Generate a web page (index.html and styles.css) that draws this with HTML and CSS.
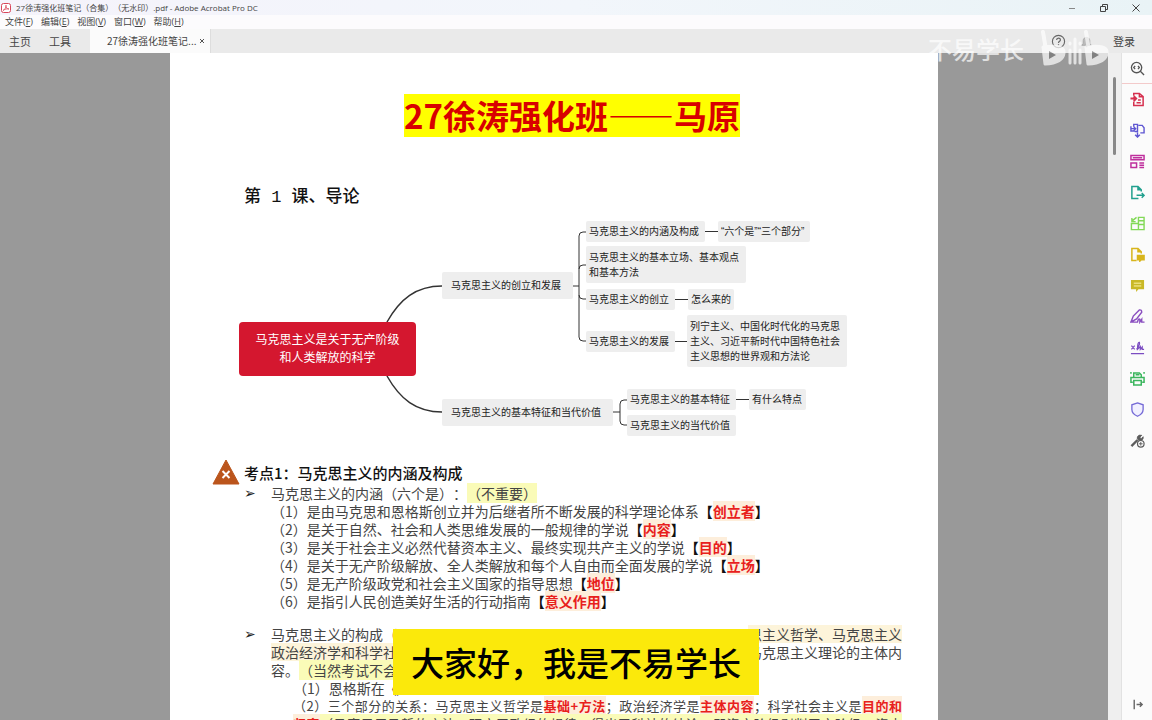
FILE: index.html
```html
<!DOCTYPE html>
<html lang="zh-CN">
<head>
    <meta charset="UTF-8">
    <meta name="viewport" content="width=device-width, initial-scale=1.0">
    <title>27徐涛强化班笔记（合集）（无水印）.pdf - Adobe Acrobat Pro DC</title>
    <link rel="stylesheet" href="styles.css">
</head>
<body>
    <header class="title-bar">
        <svg class="app-icon" viewBox="0 0 10 10"><rect x="0.5" y="0.5" width="9" height="9" rx="2" fill="#fff" stroke="#d8465a"/><path d="M2 7.500C4 6.500 5.300 4 5 2.200C4.500 4.500 6 6 8 6C6 5.500 4 6 2 7.500Z" fill="none" stroke="#d8465a" stroke-width="0.800"/></svg>
        <span class="window-title">27徐涛强化班笔记（合集）（无水印）.pdf - Adobe Acrobat Pro DC</span>
        <div class="window-buttons">
            <button aria-label="最小化"><svg viewBox="0 0 10 10"><path d="M2 5.500H8" stroke="#888"/></svg></button>
            <button aria-label="还原"><svg viewBox="0 0 10 10"><path d="M1.500 3.500H6.500V8.500H1.500ZM3.500 3V1.500H8.500V6.500H7" fill="none" stroke="#444"/></svg></button>
            <button aria-label="关闭"><svg viewBox="0 0 10 10"><path d="M1.500 1.500L8.500 8.500M8.500 1.500L1.500 8.500" stroke="#444"/></svg></button>
        </div>
    </header>

    <nav class="menu-bar">
        <button>文件(<u>F</u>)</button>
        <button>编辑(<u>E</u>)</button>
        <button>视图(<u>V</u>)</button>
        <button>窗口(<u>W</u>)</button>
        <button>帮助(<u>H</u>)</button>
    </nav>

    <div class="tab-bar">
        <button class="tab-home">主页</button>
        <button class="tab-home">工具</button>
        <div class="tab-active">
            <span>27徐涛强化班笔记...</span>
            <button class="tab-close" aria-label="关闭标签"><svg viewBox="0 0 6 6" width="6" height="6"><path d="M1 1L5 5M5 1L1 5" stroke="#555"/></svg></button>
        </div>
        <div class="account">
            <button aria-label="帮助"><svg class="icon" viewBox="0 0 16 16"><circle cx="8" cy="8" r="6.500" fill="none" stroke="#666" stroke-width="1.200"/><path d="M6 6.500C6 3.800 10 3.800 10 6.300C10 7.800 8 7.700 8 9.500M8 10.800V12" fill="none" stroke="#666" stroke-width="1.300"/></svg></button>
            <button aria-label="通知"><svg class="icon" viewBox="0 0 16 16"><path d="M3 12H13L11.500 10V7C11.500 2.500 4.500 2.500 4.500 7V10ZM7 13.500H9" fill="#bbb" stroke="#aaa"/></svg></button>
            <button class="login">登录</button>
        </div>
    </div>

    <main class="workspace">
        <div class="viewer">
            <article class="page">
                <h1 class="doc-title"><span>27徐涛强化班——马原</span></h1>
                <h2 class="lesson">第 1 课、导论</h2>

                <div class="mindmap">
                    <svg class="links" viewBox="0 0 680 225" width="680" height="225" fill="none" stroke="#333">
                        <path d="M217 107C230 84 246 71 272 71M217 161C230 184 246 197 272 197" stroke-width="1.500"/>
                        <path d="M403 71H409M416 17H413Q409 17 409 21V122Q409 126 413 126H416M416 50H413Q409 50 409 54M416 84H413Q409 84 409 80"/>
                        <path d="M535 16.500H548M505 84.500H518M505 126.500H517M566 184.500H579"/>
                        <path d="M443 197H450M457 185H454Q450 185 450 189V206Q450 210 454 210H457"/>
                    </svg>
                    <div class="node root">马克思主义是关于无产阶级<br>和人类解放的科学</div>
                    <div class="node branch-origin">马克思主义的创立和发展</div>
                    <div class="node branch-value">马克思主义的基本特征和当代价值</div>
                    <div class="node leaf-meaning">马克思主义的内涵及构成</div>
                    <div class="node leaf-parts">“六个是”“三个部分”</div>
                    <div class="node leaf-stance">马克思主义的基本立场、基本观点<br>和基本方法</div>
                    <div class="node leaf-founding">马克思主义的创立</div>
                    <div class="node leaf-how">怎么来的</div>
                    <div class="node leaf-growth">马克思主义的发展</div>
                    <div class="node leaf-theories">列宁主义、中国化时代化的马克思<br>主义、习近平新时代中国特色社会<br>主义思想的世界观和方法论</div>
                    <div class="node leaf-feature">马克思主义的基本特征</div>
                    <div class="node leaf-what">有什么特点</div>
                    <div class="node leaf-today">马克思主义的当代价值</div>
                </div>

                <h3 class="point">
                    <svg viewBox="0 0 28 26" width="28" height="26"><path d="M14 1L27 25H1Z" fill="#bb551c" stroke="#bb551c" stroke-linejoin="round"/><path d="M10.500 12L17.500 19M17.500 12L10.500 19" stroke="#fff" stroke-width="2"/></svg>
                    <span>考点1：马克思主义的内涵及构成</span>
                </h3>

                <section class="notes">
                    <span class="bullet">➢</span>
                    <div class="lines">
                        <p>马克思主义的内涵（六个是）：<mark class="hl-yellow">（不重要）</mark></p>
                        <p>（1）是由马克思和恩格斯创立并为后继者所不断发展的科学理论体系<b>【<mark>创立者</mark>】</b></p>
                        <p>（2）是关于自然、社会和人类思维发展的一般规律的学说<b>【<mark>内容</mark>】</b></p>
                        <p>（3）是关于社会主义必然代替资本主义、最终实现共产主义的学说<b>【<mark>目的</mark>】</b></p>
                        <p>（4）是关于无产阶级解放、全人类解放和每个人自由而全面发展的学说<b>【<mark>立场</mark>】</b></p>
                        <p>（5）是无产阶级政党和社会主义国家的指导思想<b>【<mark>地位</mark>】</b></p>
                        <p>（6）是指引人民创造美好生活的行动指南<b>【<mark>意义作用</mark>】</b></p>
                    </div>
                </section>

                <section class="notes">
                    <span class="bullet">➢</span>
                    <div class="lines">
                        <p class="split"><span>马克思主义的构成（</span><span class="hl-peach">思主义哲学、马克思主义</span></p>
                        <p class="split"><span class="hl-peach">政治经济学和科学社</span><span>马克思主义理论的主体内</span></p>
                        <p>容。<span class="hl-yellow">（当然考试不会</span></p>
                        <p class="indent">（1）恩格斯在《</p>
                        <p class="indent full">（2）三个部分的关系：马克思主义哲学是<mark>基础+方法</mark>；政治经济学是<mark>主体内容</mark>；科学社会主义是<mark>目的和</mark></p>
                        <p class="indent full"><mark>归宿</mark><span class="hl-yellow">（马克思用马哲的方法，研究了政经的规律，得出了科社的结论，即资产阶级剥削无产阶级，资本</span></p>
                    </div>
                </section>
            </article>
        </div>

        <div class="scrollbar"><div class="thumb"></div></div>

        <aside class="tools">
            <button class="search" aria-label="搜索工具"><svg class="icon" viewBox="0 0 16 16" fill="none" stroke="#555" stroke-width="1.400"><circle cx="7" cy="7" r="5.500"/><path d="M11 11L15 15M5.500 5.300L4 7L5.500 8.700M8.500 5.300L10 7L8.500 8.700"/></svg></button>
            <button aria-label="创建 PDF"><svg class="icon" viewBox="0 0 16 16" fill="none" stroke="#d6304f" stroke-width="1.600"><path d="M4 4V1.500H10L14 5V14.500H4V10M10 1.500V5H14"/><path d="M0.500 7H6M4 4.500L6.500 7L4 9.500" stroke-width="2.200"/><path d="M7 11.500H11.500M8.500 8.500H11.500"/></svg></button>
            <button aria-label="合并文件"><svg class="icon" viewBox="0 0 16 16" fill="none" stroke="#5f57d2" stroke-width="1.500"><path d="M4 4V1.500H8V9H5M9 2.500H13L15 5V10.500H11M1 3.500V8.500H5M8 10V15M5.500 12.500L8 15L10.500 12.500M1 6H6M4 4L6 6L4 8"/></svg></button>
            <button aria-label="组织页面"><svg class="icon" viewBox="0 0 16 16" fill="none" stroke="#bf2f9d" stroke-width="1.600"><path d="M1 1.500H15V6H1ZM1 9.500H7V14.500H1ZM10 9.500H15M10 12H15M10 14.500H15M3 4H13"/></svg></button>
            <button aria-label="导出 PDF"><svg class="icon" viewBox="0 0 16 16" fill="none" stroke="#21a08e" stroke-width="1.600"><path d="M12 7V5L8.500 1.500H2V14.500H9M8.500 1.500V5H12M7 11H15M12.500 8.500L15 11L12.500 13.500"/></svg></button>
            <button aria-label="编辑 PDF"><svg class="icon" viewBox="0 0 16 16" fill="none" stroke="#82d957" stroke-width="1.500"><path d="M9 1.500H15V14.500H9ZM1.500 8V14.500H9V8ZM7 1.500L2 5.500M2 2V6H6M9 5H15M9 9H15"/></svg></button>
            <button aria-label="发送以供审阅"><svg class="icon" viewBox="0 0 16 16" fill="none" stroke="#d8b51c" stroke-width="1.600"><path d="M12 7V5L8.500 1.500H2V14.500H7M8.500 1.500V5H12"/><path d="M8 9H15V13.500H12L10.500 15V13.500H8Z" fill="#d8b51c"/></svg></button>
            <button aria-label="注释"><svg class="icon" viewBox="0 0 16 16"><path d="M1 2H15V12H9L6.500 15V12H1Z" fill="#c9b826"/><path d="M4 5.500H12M4 8.500H12" stroke="#fff6b0"/></svg></button>
            <button aria-label="填写和签名"><svg class="icon" viewBox="0 0 16 16" fill="none" stroke="#8a4fc0" stroke-width="1.500"><path d="M1 14L3.500 7.500L10 1Q12.500 0.500 12.500 3.500L7 10.500L1 14H8Q9 9.500 10.500 11V14L12.500 11V14H15.500"/></svg></button>
            <button aria-label="请求签名"><svg class="icon" viewBox="0 0 16 16" fill="none" stroke="#7b4cc2" stroke-width="1.300"><path d="M1 14.500H15M1.500 6L5 10M5 6L1.500 10M7 10Q11 5 10 2.500Q8 2 8 10L11 7V10L13 7.500V10H15"/></svg></button>
            <button aria-label="扫描和 OCR"><svg class="icon" viewBox="0 0 16 16" fill="none" stroke="#3bb65e" stroke-width="1.600"><path d="M4 6V2H10L12 4V6M3 12H1V7H15V12H13M4 10H12V15H4ZM1 3V1M15 3V1M6 4H10"/></svg></button>
            <button aria-label="保护"><svg class="icon" viewBox="0 0 16 16"><path d="M8 1L14 3V8Q14 12.500 8 15.200Q2 12.500 2 8V3Z" fill="#f1f0ff" stroke="#7469d6" stroke-width="1.400"/></svg></button>
            <button aria-label="更多工具"><svg class="icon" viewBox="0 0 16 16" fill="none" stroke="#5c5c5c"><path d="M1.500 14L8 7.500" stroke-width="2.500"/><path d="M12.500 2.500L10.500 4.500L12 6L14 4Q14.500 8 10.500 8Q7 7.500 8 4Q9 1.500 12.500 2.500Z" fill="#5c5c5c"/><circle cx="11.500" cy="11.500" r="3.500" fill="#fff" stroke-width="1.300"/><path d="M11.500 9.500V13.500M9.500 11.500H13.500"/></svg></button>
            <button class="collapse" aria-label="折叠"><svg class="icon" viewBox="0 0 16 16" fill="none" stroke="#666" stroke-width="1.500"><path d="M4.500 3V13M7 8H13M10.500 5.500L13 8L10.500 10.500"/></svg></button>
        </aside>
    </main>

    <div class="watermark">
        <span>不易学长</span>
        <svg viewBox="0 0 74 40" width="74" height="40" fill="none" stroke="#fff" stroke-linejoin="round" stroke-linecap="round">
            <path d="M5 3L8 21M48 3L51 21" stroke-width="4"/>
            <path d="M5 18Q27 15 26 24Q25 34 7 35ZM48 18Q70 15 69 24Q68 34 50 35Z" fill="#fff" stroke-width="3"/>
            <path d="M32 21V34M37 10V34M42 21V34M32 14V15M42 14V15" stroke-width="3"/>
            <path d="M11 22L18 26L11 30ZM54 22L61 26L54 30Z" fill="#777" stroke="none"/>
        </svg>
    </div>

    <div class="caption">大家好，我是不易学长</div>
</body>
</html>
```

FILE: styles.css
```css
* {
    margin: 0;
    padding: 0;
    box-sizing: border-box;
}

body {
    position: relative;
    display: flex;
    flex-direction: column;
    height: 100vh;
    overflow: hidden;
    font-family: "Noto Sans CJK SC", sans-serif;
    text-spacing-trim: space-all;
    color: #444;
    background-color: #999;
}

button {
    border: none;
    background: none;
    font: inherit;
    color: inherit;
    cursor: pointer;
}

.icon {
    display: block;
    width: 15px;
    height: 15px;
}

/* window frame */
.title-bar {
    display: flex;
    align-items: center;
    height: 15px;
    padding-left: 1px;
    gap: 5px;
    font-family: "Open Sans", "Noto Sans CJK SC", sans-serif;
    font-size: 8px;
    line-height: 15px;
    background: linear-gradient(to right, #f5f3fb, #f2f6fb 50%, #e9f3f6);
}

.app-icon {
    width: 10px;
    height: 10px;
}

.window-title {
    flex: 1;
    white-space: nowrap;
}

.window-buttons {
    display: flex;
}

.window-buttons button {
    display: grid;
    place-items: center;
    width: 32px;
    height: 15px;
}

.window-buttons svg {
    width: 10px;
    height: 10px;
}

.menu-bar {
    display: flex;
    gap: 8px;
    height: 14px;
    padding-left: 5px;
    font-family: "Open Sans", "Noto Sans CJK SC", sans-serif;
    font-size: 9px;
    line-height: 14px;
    background-color: #fcfbfd;
}

.tab-bar {
    display: flex;
    height: 24px;
    font-size: 11px;
    line-height: 24px;
    background-color: #eaeaea;
}

.tab-home {
    width: 40px;
}

.tab-active {
    display: flex;
    justify-content: space-between;
    width: 121px;
    margin-left: 10px;
    padding: 0 5px 0 17px;
    font-size: 10px;
    white-space: nowrap;
    background-color: #fbfbfb;
    border-right: 1px solid #ddd;
}

.tab-close {
    display: grid;
    place-items: center;
}

.account {
    display: flex;
    align-items: center;
    gap: 13px;
    margin-left: auto;
    padding-right: 17px;
}

.login {
    margin-left: 6px;
}

/* document */
.workspace {
    display: flex;
    flex: 1;
    min-height: 0;
}

.viewer {
    flex: 1;
    overflow: hidden;
    background-color: #999;
}

.page {
    max-width: 768px;
    min-height: 100%;
    margin: 0 auto;
    padding-top: 41px;
    background-color: #fff;
}

.doc-title {
    padding-left: 36px;
    color: #d80000;
    font-size: 33px;
    font-weight: 700;
    line-height: 43px;
    text-align: center;
}

.doc-title span {
    display: inline-block;
    background-color: #ff0;
}

.lesson {
    margin-top: 49px;
    padding-left: 74px;
    color: #111;
    font-family: "Liberation Mono", "Noto Sans CJK SC", monospace;
    font-size: 17px;
    font-weight: 500;
    line-height: 24px;
}

.mindmap {
    position: relative;
    height: 245px;
    margin-top: 5px;
    color: #222;
    font-family: "Liberation Sans", "Noto Sans CJK SC", sans-serif;
    font-size: 10px;
    line-height: 15px;
}

.links {
    position: absolute;
    left: 0;
    top: 0;
}

/* nodes are placed freely on the map */
.node {
    position: absolute;
    display: flex;
    align-items: center;
    height: 21px;
    padding-left: 3px;
    white-space: nowrap;
    background-color: #eee;
    border-radius: 2px;
}

.root {
    left: 69px;
    top: 107px;
    width: 177px;
    height: 54px;
    justify-content: center;
    padding: 0;
    color: #fff;
    font-size: 12px;
    line-height: 18px;
    text-align: center;
    background-color: #d4172f;
    border-radius: 4px;
}

.branch-origin,
.branch-value {
    left: 272px;
    height: 27px;
    padding-left: 9px;
}

.branch-origin { top: 57px; width: 131px; }
.branch-value { top: 184px; width: 171px; }

.leaf-meaning { left: 416px; top: 6px; width: 119px; }
.leaf-parts { left: 548px; top: 6px; width: 92px; }
.leaf-stance { left: 416px; top: 31px; width: 160px; height: 37px; }
.leaf-founding { left: 416px; top: 74px; width: 89px; }
.leaf-how { left: 518px; top: 74px; width: 46px; }
.leaf-growth { left: 416px; top: 116px; width: 89px; }
.leaf-theories { left: 517px; top: 100px; width: 160px; height: 52px; }
.leaf-feature { left: 457px; top: 174px; width: 109px; }
.leaf-what { left: 579px; top: 174px; width: 57px; }
.leaf-today { left: 457px; top: 200px; width: 109px; }

.point {
    display: flex;
    align-items: center;
    gap: 4px;
    height: 24px;
    padding-left: 42px;
    color: #111;
    font-size: 15px;
    font-weight: 500;
}

.notes {
    display: flex;
    margin-bottom: 15px;
    padding: 0 36px 0 74px;
    font-size: 14px;
    line-height: 18px;
}

.bullet {
    width: 27px;
    color: #222;
    font-family: "DejaVu Sans", sans-serif;
    font-size: 14px;
}

.lines {
    flex: 1;
    min-width: 0;
}

.lines p {
    height: 18px;
    white-space: nowrap;
}

.lines .split {
    display: flex;
    justify-content: space-between;
}

.lines .indent {
    padding-left: 22px;
}

.lines .full {
    font-size: 13px;
    white-space: normal;
    text-align: justify;
    text-align-last: justify;
}

b {
    color: #111;
}

mark {
    color: #e8201c;
    font-weight: 700;
    background-color: #fdeedb;
}

.hl-yellow {
    color: inherit;
    font-weight: 400;
    background-color: #fafbb8;
}

.hl-peach {
    background-color: #fdf4da;
}

/* right side */
.scrollbar {
    width: 13px;
    padding: 24px 5px 0 5px;
    background-color: #efefef;
}

.thumb {
    height: 78px;
    background-color: #888;
    border-radius: 2px;
}

.tools {
    display: flex;
    flex-direction: column;
    width: 31px;
    background-color: #fbfbfb;
    border-left: 1px solid #e2e2e2;
}

.tools button {
    display: grid;
    place-items: center;
    height: 31px;
}

.tools .search {
    border-bottom: 1px solid #f3caca;
}

.tools .collapse {
    margin-top: auto;
}

/* overlays of the video */
.watermark {
    position: absolute;
    top: 29px;
    right: 40px;
    display: flex;
    align-items: center;
    gap: 14px;
    color: #fff;
    font-size: 24px;
    font-weight: 500;
    line-height: 40px;
    opacity: 0.7;
}

.caption {
    position: absolute;
    bottom: 25px;
    left: 50%;
    padding: 0 18px;
    color: #000;
    font-size: 33px;
    font-weight: 500;
    line-height: 66px;
    white-space: nowrap;
    background-color: #fbe90b;
    transform: translateX(-50%);
}
```
